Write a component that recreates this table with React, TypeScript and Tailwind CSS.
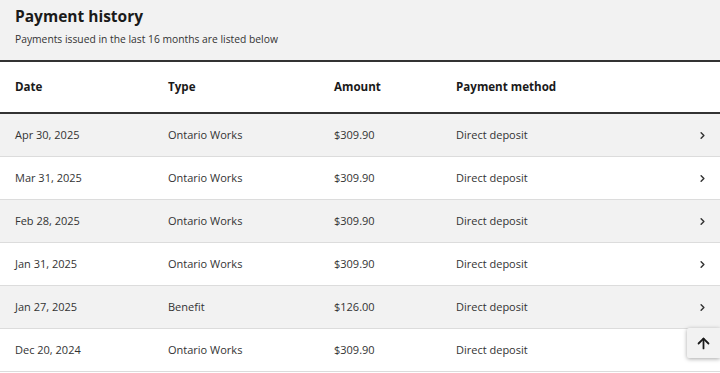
import { ArrowUp, ChevronRight } from 'lucide-react';

const payments = [
    { date: 'Apr 30, 2025', type: 'Ontario Works', amount: '$309.90', method: 'Direct deposit' },
    { date: 'Mar 31, 2025', type: 'Ontario Works', amount: '$309.90', method: 'Direct deposit' },
    { date: 'Feb 28, 2025', type: 'Ontario Works', amount: '$309.90', method: 'Direct deposit' },
    { date: 'Jan 31, 2025', type: 'Ontario Works', amount: '$309.90', method: 'Direct deposit' },
    { date: 'Jan 27, 2025', type: 'Benefit', amount: '$126.00', method: 'Direct deposit' },
    { date: 'Dec 20, 2024', type: 'Ontario Works', amount: '$309.90', method: 'Direct deposit' },
];

export default function App() {
    return (
        <div className="min-h-screen bg-white text-[#1a1a1a] font-['Open_Sans',sans-serif]">
            {/* En-tête */}
            <div className="h-[60px] bg-[#f2f2f2] px-[15px] pt-[5px]">
                <h1 className="text-[15.5px] leading-[22px] font-bold">Payment history</h1>
                <p className="mt-[5px] text-[10.3px] leading-[14px] text-[#333]">
                    Payments issued in the last 16 months are listed below
                </p>
            </div>

            {/* Tableau */}
            <div className="border-t-2 border-[#333]">
                <div className="grid h-[52px] grid-cols-[153px_166px_122px_1fr] items-center border-b-2 border-[#333] pl-[15px] text-[11.6px] font-bold">
                    <span>Date</span>
                    <span>Type</span>
                    <span>Amount</span>
                    <span>Payment method</span>
                </div>

                {payments.map((p, i) => (
                    <div
                        key={p.date}
                        className={`grid h-[43px] grid-cols-[153px_166px_122px_1fr_auto] items-center border-b border-[#dcdcdc] pl-[15px] pr-[12px] text-[11px] text-[#333] ${
                            i % 2 === 0 ? 'bg-[#f2f2f2]' : 'bg-white'
                        }`}
                    >
                        <span>{p.date}</span>
                        <span>{p.type}</span>
                        <span>{p.amount}</span>
                        <span>{p.method}</span>
                        <ChevronRight className="h-[11px] w-[11px] text-[#333]" strokeWidth={3.2} />
                    </div>
                ))}
            </div>

            {/* Retour en haut */}
            <button className="fixed right-0 top-[328px] flex h-[30px] w-[33px] items-center justify-center rounded-l-[2px] bg-[#f2f2f2] shadow-[0_1px_4px_rgba(0,0,0,0.35)]">
                <ArrowUp className="h-[17px] w-[17px] text-[#1a1a1a]" strokeWidth={2.5} />
            </button>
        </div>
    );
}
